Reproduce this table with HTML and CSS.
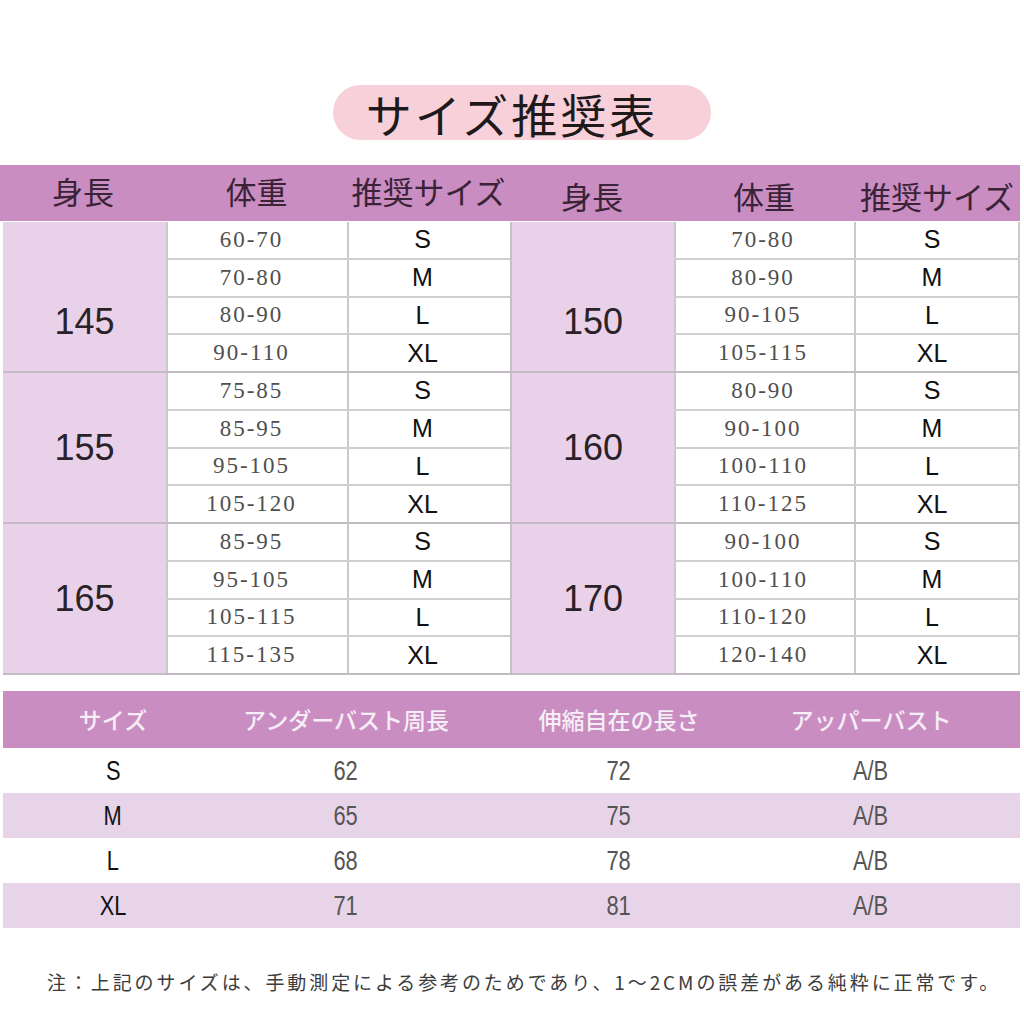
FILE: index.html
```html
<!DOCTYPE html>
<html lang="ja">
<head>
<meta charset="utf-8">
<title>サイズ推奨表</title>
<link rel="stylesheet" href="styles.css">
</head>
<body>
<div class="page">
  <div class="title-wrap"><div class="title">サイズ推奨表</div></div>

  <div class="head-band">
    <div class="hc c-h">身長</div>
    <div class="hc c-w">体重</div>
    <div class="hc c-s">推奨サイズ</div>
    <div class="hc c-h2">身長</div>
    <div class="hc c-w2">体重</div>
    <div class="hc c-s2">推奨サイズ</div>
  </div>

  <div class="body-grid">
    <div class="half left">
      <div class="group first">
        <div class="hcell">145</div>
        <div class="rows">
          <div class="row"><div class="w">60-70</div><div class="s">S</div></div>
          <div class="row"><div class="w">70-80</div><div class="s">M</div></div>
          <div class="row"><div class="w">80-90</div><div class="s">L</div></div>
          <div class="row"><div class="w">90-110</div><div class="s">XL</div></div>
        </div>
      </div>
      <div class="group">
        <div class="hcell">155</div>
        <div class="rows">
          <div class="row"><div class="w">75-85</div><div class="s">S</div></div>
          <div class="row"><div class="w">85-95</div><div class="s">M</div></div>
          <div class="row"><div class="w">95-105</div><div class="s">L</div></div>
          <div class="row"><div class="w">105-120</div><div class="s">XL</div></div>
        </div>
      </div>
      <div class="group">
        <div class="hcell">165</div>
        <div class="rows">
          <div class="row"><div class="w">85-95</div><div class="s">S</div></div>
          <div class="row"><div class="w">95-105</div><div class="s">M</div></div>
          <div class="row"><div class="w">105-115</div><div class="s">L</div></div>
          <div class="row"><div class="w">115-135</div><div class="s">XL</div></div>
        </div>
      </div>
    </div>
    <div class="half right">
      <div class="group first">
        <div class="hcell">150</div>
        <div class="rows">
          <div class="row"><div class="w">70-80</div><div class="s">S</div></div>
          <div class="row"><div class="w">80-90</div><div class="s">M</div></div>
          <div class="row"><div class="w">90-105</div><div class="s">L</div></div>
          <div class="row"><div class="w">105-115</div><div class="s">XL</div></div>
        </div>
      </div>
      <div class="group">
        <div class="hcell">160</div>
        <div class="rows">
          <div class="row"><div class="w">80-90</div><div class="s">S</div></div>
          <div class="row"><div class="w">90-100</div><div class="s">M</div></div>
          <div class="row"><div class="w">100-110</div><div class="s">L</div></div>
          <div class="row"><div class="w">110-125</div><div class="s">XL</div></div>
        </div>
      </div>
      <div class="group">
        <div class="hcell">170</div>
        <div class="rows">
          <div class="row"><div class="w">90-100</div><div class="s">S</div></div>
          <div class="row"><div class="w">100-110</div><div class="s">M</div></div>
          <div class="row"><div class="w">110-120</div><div class="s">L</div></div>
          <div class="row"><div class="w">120-140</div><div class="s">XL</div></div>
        </div>
      </div>
    </div>
  </div>

  <div class="t2">
    <div class="t2-head">
      <div class="t2c k1">サイズ</div>
      <div class="t2c k2">アンダーバスト周長</div>
      <div class="t2c k3">伸縮自在の長さ</div>
      <div class="t2c k4">アッパーバスト</div>
    </div>
    <div class="t2-row">
      <div class="t2c k1 sz"><span>S</span></div>
      <div class="t2c k2 num"><span>62</span></div>
      <div class="t2c k3 num"><span>72</span></div>
      <div class="t2c k4 num"><span>A/B</span></div>
    </div>
    <div class="t2-row alt">
      <div class="t2c k1 sz"><span>M</span></div>
      <div class="t2c k2 num"><span>65</span></div>
      <div class="t2c k3 num"><span>75</span></div>
      <div class="t2c k4 num"><span>A/B</span></div>
    </div>
    <div class="t2-row">
      <div class="t2c k1 sz"><span>L</span></div>
      <div class="t2c k2 num"><span>68</span></div>
      <div class="t2c k3 num"><span>78</span></div>
      <div class="t2c k4 num"><span>A/B</span></div>
    </div>
    <div class="t2-row alt">
      <div class="t2c k1 sz"><span>XL</span></div>
      <div class="t2c k2 num"><span>71</span></div>
      <div class="t2c k3 num"><span>81</span></div>
      <div class="t2c k4 num"><span>A/B</span></div>
    </div>
  </div>

  <p class="note">注：上記のサイズは、手動測定による参考のためであり、1～2CMの誤差がある純粋に正常です。</p>
</div>
</body>
</html>
```

FILE: styles.css
```css
* { box-sizing: border-box; }
html, body { margin: 0; padding: 0; background: #ffffff; }
body {
  width: 1024px;
  height: 1024px;
  overflow: hidden;
  font-family: "Noto Sans CJK JP", "Liberation Sans", sans-serif;
  color: #222;
}
.page { width: 1024px; }

/* Title pill */
.title-wrap {
  padding-top: 85px;
  padding-left: 333px;
}
.title {
  width: 378px;
  height: 55px;
  border-radius: 28px;
  background: #f8d0d9;
  display: flex;
  align-items: center;
  justify-content: center;
  padding-right: 20px;
  font-size: 46px;
  letter-spacing: 3px;
  font-weight: 400;
  color: #1e1a1c;
  line-height: 1;
}

/* Header band of first table */
.head-band {
  margin-top: 25px;
  width: 1020px;
  height: 56px;
  background: #c98dc1;
  display: flex;
  align-items: center;
}
.hc {
  text-align: center;
  font-size: 31px;
  color: #3a2337;
  line-height: 1;
  white-space: nowrap;
  padding-bottom: 6px;
}
.c-h { width: 166px; }
.c-w { width: 181px; }
.c-s { width: 163px; }
.c-h2 { width: 164px; padding-top: 4px; padding-bottom: 0; }
.c-w2 { width: 180px; padding-top: 4px; padding-bottom: 0; }
.c-s2 { width: 166px; padding-top: 4px; padding-bottom: 0; }

/* Body of first table */
.body-grid {
  display: flex;
  padding-left: 3px;
  margin-top: 1px;
}
.half { display: flex; flex-direction: column; }
.group {
  display: flex;
  height: 151px;
  border-bottom: 2px solid #c4bcc4;
}
.hcell {
  background: #e9d2e9;
  display: flex;
  align-items: center;
  justify-content: center;
  font-family: "Liberation Sans", sans-serif;
  font-size: 36px;
  color: #2a2228;
}
.group.first .hcell { padding-top: 50px; }
.left .hcell { width: 163px; }
.right .hcell { width: 164px; border-left: 2px solid #c8c0c8; }
.rows { display: flex; flex-direction: column; }
.row {
  flex: 1;
  display: flex;
  border-bottom: 2px solid #cfcfcf;
}
.row:last-child { border-bottom: none; }
.w, .s {
  display: flex;
  align-items: center;
  justify-content: center;
  border-left: 2px solid #c9c9c9;
  background: #fff;
}
.left .w { width: 181px; padding-right: 12px; }
.left .s { width: 163px; padding-right: 14px; }
.right .w { width: 180px; padding-right: 4px; }
.right .s { width: 166px; padding-right: 10px; border-right: 2px solid #c9c9c9; }
.w {
  font-family: "Liberation Serif", serif;
  font-size: 23px;
  letter-spacing: 2px;
  color: #4f4f4f;
}
.s {
  font-family: "Liberation Sans", sans-serif;
  font-size: 25px;
  color: #111;
}

/* Second table */
.t2 {
  margin-top: 16px;
  padding-left: 3px;
  width: 1020px;
}
.t2-head {
  height: 57px;
  background: #c98dc1;
  display: flex;
  align-items: center;
}
.t2-head .t2c {
  font-size: 23px;
  color: #f6eef6;
  line-height: 1;
  font-weight: 500;
}
.t2-row {
  height: 45px;
  display: flex;
  align-items: center;
  background: #fff;
}
.t2-row.alt { background: #e8d4e8; }
.t2c {
  text-align: center;
  white-space: nowrap;
}
.k1 { width: 220px; }
.k2 { width: 246px; }
.k3 { width: 300px; }
.k4 { width: 204px; }
.t2-row .t2c span {
  display: inline-block;
  transform: scaleX(0.78);
  font-family: "Liberation Sans", sans-serif;
  font-size: 28px;
  line-height: 1;
}
.sz span { color: #111; }
.num span { color: #555; }

/* Note */
.note {
  margin: 40px 0 0 47px;
  font-size: 19px;
  letter-spacing: 2.9px;
  color: #3c3c3c;
  white-space: nowrap;
}
```
